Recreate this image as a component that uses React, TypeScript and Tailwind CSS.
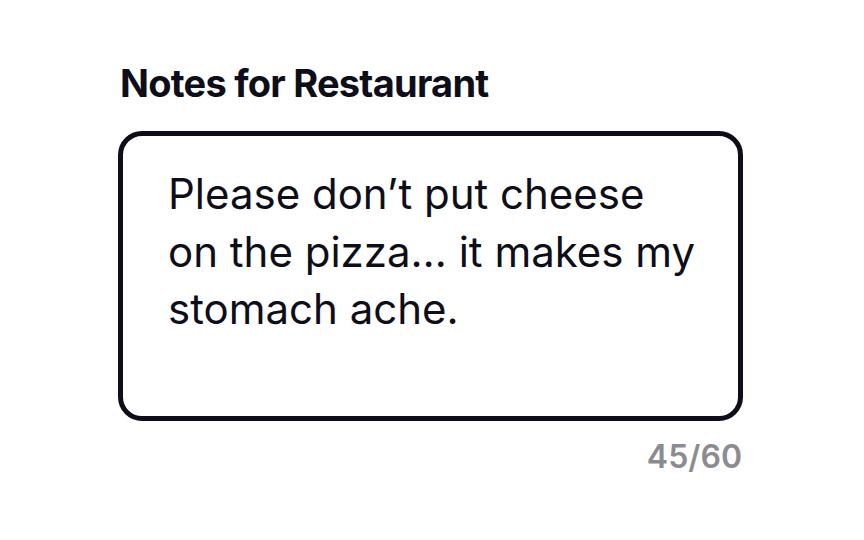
import React from "react";

const App: React.FC = () => {
  const note = "Please don’t put cheese on the pizza… it makes my stomach ache.";

  return (
    <div className="w-[864px] h-[540px] bg-white font-['Inter',sans-serif] text-[#0e0e1a]">
      <div className="w-[625px] ml-[118px] pt-[60px]">
        <label className="block text-[38px] leading-[46px] font-bold tracking-[-0.02em] pl-[2px]">
          Notes for Restaurant
        </label>

        <div className="mt-[25px] h-[290px] border-[5px] border-[#0e0e1a] rounded-[24px] pl-[45px] pt-[29px]">
          <p className="w-[530px] text-[42px] leading-[57.5px]">{note}</p>
        </div>

        <div className="mt-[17px] text-right text-[32px] leading-[38px] font-semibold text-[#8b8b91] pr-[1px]">
          45/60
        </div>
      </div>
    </div>
  );
};

export default App;
